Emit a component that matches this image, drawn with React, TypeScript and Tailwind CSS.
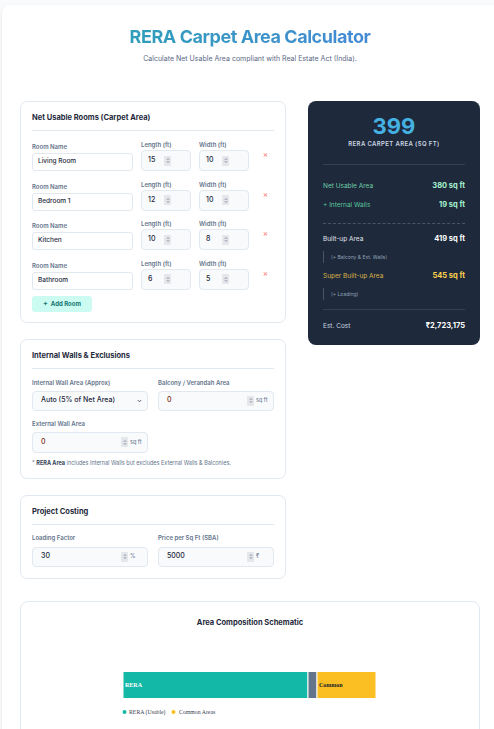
import React from "react";

interface Room {
  name: string;
  length: number;
  width: number;
}

const rooms: Room[] = [
  { name: "Living Room", length: 15, width: 10 },
  { name: "Bedroom 1", length: 12, width: 10 },
  { name: "Kitchen", length: 10, width: 8 },
  { name: "Bathroom", length: 6, width: 5 },
];

const font = { fontFamily: "Inter, 'Noto Sans', sans-serif" };

function Spinner() {
  return (
    <div className="flex h-[10px] w-[7px] flex-col items-center justify-center gap-[1px] rounded-[1px] bg-[#e5e7eb]">
      <svg width="4" height="3" viewBox="0 0 4 3">
        <path d="M0 3 L2 0.5 L4 3 Z" fill="#b6bcc6" />
      </svg>
      <svg width="4" height="3" viewBox="0 0 4 3">
        <path d="M0 0 L2 2.5 L4 0 Z" fill="#b6bcc6" />
      </svg>
    </div>
  );
}

function Label({ children, className = "" }: { children: React.ReactNode; className?: string }) {
  return (
    <div className={"text-[6px] leading-[8px] font-semibold text-[#64748b] " + className}>
      {children}
    </div>
  );
}

function NumField({
  value,
  unit,
  height,
  valueClass = "text-[#1e293b]",
}: {
  value: string;
  unit?: string;
  height: string;
  valueClass?: string;
}) {
  return (
    <div className={"flex items-center rounded-[4px] border border-[#e2e8f0] bg-[#f8fafc] pl-[8px] " + height}>
      <span className={"flex-1 text-[7px] font-medium " + valueClass}>{value}</span>
      <Spinner />
      <span className="w-[19px] pl-[2px] text-[5.5px] text-[#64748b]">{unit}</span>
    </div>
  );
}

function CardHeading({ children }: { children: React.ReactNode }) {
  return (
    <div className="border-b border-[#e2e8f0] pb-[6px] text-[7.5px] leading-[12px] font-bold text-[#1e293b]">
      {children}
    </div>
  );
}

function RoomRow({ room }: { room: Room }) {
  return (
    <div className="grid grid-cols-[101px_50px_50px_1fr] items-end gap-x-[8px]">
      <div>
        <Label className="mb-[2px]">Room Name</Label>
        <div className="flex h-[18px] items-center rounded-[3px] border border-[#e2e8f0] bg-white px-[5px] text-[6.5px] font-medium text-[#1e293b]">
          {room.name}
        </div>
      </div>
      <div>
        <Label className="mb-[1px]">Length (ft)</Label>
        <div className="flex h-[21px] items-center rounded-[4px] border border-[#e2e8f0] bg-[#f8fafc] pl-[6px]">
          <span className="w-[16px] text-[7px] font-medium text-[#1e293b]">{room.length}</span>
          <Spinner />
        </div>
      </div>
      <div>
        <Label className="mb-[1px]">Width (ft)</Label>
        <div className="flex h-[21px] items-center rounded-[4px] border border-[#e2e8f0] bg-[#f8fafc] pl-[6px]">
          <span className="w-[16px] text-[7px] font-medium text-[#1e293b]">{room.width}</span>
          <Spinner />
        </div>
      </div>
      <div className="flex h-[30px] items-start justify-center pt-[9px] text-[8px] leading-[8px] text-[#f87171]">
        ×
      </div>
    </div>
  );
}

function SummaryRow({
  label,
  value,
  labelClass,
  valueClass,
}: {
  label: string;
  value: string;
  labelClass: string;
  valueClass: string;
}) {
  return (
    <div className="flex items-center justify-between leading-[10px]">
      <span className={"text-[6.5px] " + labelClass}>{label}</span>
      <span className={"text-[7.5px] font-bold " + valueClass}>{value}</span>
    </div>
  );
}

function Note({ children }: { children: React.ReactNode }) {
  return (
    <div className="border-l border-[#475569] py-[2px] pl-[7px] text-[5px] leading-[8px] text-[#94a3b8]">
      {children}
    </div>
  );
}

function Schematic() {
  const serif = "'Liberation Serif', 'DejaVu Serif', serif";
  return (
    <svg width="256" height="70" viewBox="0 0 256 70" className="mx-auto block">
      <rect x="1" y="20.5" width="185" height="27" fill="#14b8a6" stroke="#ffffff" strokeWidth="1" />
      <rect x="186" y="20.5" width="9" height="27" fill="#64748b" stroke="#ffffff" strokeWidth="1" />
      <rect x="195" y="20.5" width="59" height="27" fill="#fbbf24" stroke="#ffffff" strokeWidth="1" />
      <text x="3" y="36" fontSize="6" fill="#ffffff" fontFamily={serif} fontWeight="bold">
        RERA
      </text>
      <text x="197" y="36" fontSize="6" fill="#111827" fontFamily={serif} fontWeight="bold">
        Common
      </text>
      <circle cx="2.5" cy="61" r="2" fill="#14b8a6" />
      <text x="7" y="63" fontSize="5.8" fill="#374151" fontFamily={serif}>
        RERA (Usable)
      </text>
      <circle cx="51.5" cy="61" r="2" fill="#fbbf24" />
      <text x="57" y="63" fontSize="5.8" fill="#374151" fontFamily={serif}>
        Common Areas
      </text>
    </svg>
  );
}

export default function App() {
  return (
    <div className="min-h-[729px] w-full overflow-hidden bg-[#f8fafc] pt-[5px] pl-[2px]" style={font}>
      <div className="min-h-[724px] w-[520px] rounded-tl-[8px] bg-white pt-[20px] pl-[18px] shadow-sm">
        <div className="w-[460px]">
          {/* Header */}
          <h1 className="bg-gradient-to-r from-[#1ea6ad] to-[#4d7fe0] bg-clip-text text-center text-[18px] leading-[24px] font-bold tracking-tight text-transparent">
            RERA Carpet Area Calculator
          </h1>
          <p className="mt-[5px] text-center text-[7px] leading-[10px] text-[#5b6885]">
            Calculate Net Usable Area compliant with Real Estate Act (India).
          </p>

          <div className="mt-[37px] grid grid-cols-[266px_172px] gap-x-[22px]">
            {/* Left column */}
            <div className="flex flex-col gap-[16px]">
              <div className="rounded-[7px] border border-[#e2e8f0] bg-white px-[11px] pt-[10px] pb-[10px]">
                <CardHeading>Net Usable Rooms (Carpet Area)</CardHeading>
                <div className="mt-[10px] flex flex-col gap-[9.5px]">
                  {rooms.map((r) => (
                    <RoomRow key={r.name} room={r} />
                  ))}
                </div>
                <button className="mt-[6px] flex h-[16px] w-[60px] items-center justify-center gap-[3px] rounded-[3px] bg-[#ccfbf1] text-[6px] font-bold text-[#0f766e]">
                  <span className="text-[7px] leading-[7px]">+</span> Add Room
                </button>
              </div>

              <div className="rounded-[7px] border border-[#e2e8f0] bg-white px-[11px] pt-[10px] pb-[11px]">
                <CardHeading>Internal Walls &amp; Exclusions</CardHeading>
                <div className="mt-[10px] grid grid-cols-2 gap-x-[10px]">
                  <div>
                    <Label className="mb-[4px] font-medium">Internal Wall Area (Approx)</Label>
                    <div className="flex h-[20px] items-center justify-between rounded-[4px] border border-[#e2e8f0] bg-[#f8fafc] pr-[5px] pl-[8px]">
                      <span className="text-[7px] font-medium text-[#1e293b]">Auto (5% of Net Area)</span>
                      <svg width="5" height="4" viewBox="0 0 5 4">
                        <path d="M0.8 1 L2.5 2.8 L4.2 1" stroke="#374151" strokeWidth="0.8" fill="none" />
                      </svg>
                    </div>
                  </div>
                  <div>
                    <Label className="mb-[4px] font-medium">Balcony / Verandah Area</Label>
                    <NumField value="0" unit="sq ft" height="h-[20px]" valueClass="text-[#7c2d12]" />
                  </div>
                </div>
                <div className="mt-[9px] grid grid-cols-2 gap-x-[10px]">
                  <div>
                    <Label className="mb-[4px] font-medium">External Wall Area</Label>
                    <NumField value="0" unit="sq ft" height="h-[21px]" valueClass="text-[#7c2d12]" />
                  </div>
                </div>
                <p className="mt-[6px] text-[5.5px] leading-[8px] text-[#64748b]">
                  * <span className="font-bold text-[#334155]">RERA Area</span> includes Internal Walls but
                  excludes External Walls &amp; Balconies.
                </p>
              </div>

              <div className="rounded-[7px] border border-[#e2e8f0] bg-white px-[11px] pt-[10px] pb-[11px]">
                <CardHeading>Project Costing</CardHeading>
                <div className="mt-[9px] grid grid-cols-2 gap-x-[10px]">
                  <div>
                    <Label className="mb-[5px] font-medium">Loading Factor</Label>
                    <NumField value="30" unit="%" height="h-[20px]" />
                  </div>
                  <div>
                    <Label className="mb-[5px] font-medium">Price per Sq Ft (SBA)</Label>
                    <NumField value="5000" unit="₹" height="h-[20px]" />
                  </div>
                </div>
              </div>
            </div>

            {/* Right column: summary */}
            <div>
              <div className="rounded-[8px] bg-[#1e293b] px-[15px] pt-[13px] pb-[14px]">
                <div className="text-center text-[22px] leading-[24px] font-bold text-[#45b1e2]">399</div>
                <div className="mt-[2px] text-center text-[6px] leading-[8px] font-semibold tracking-[0.06em] text-[#cbd5e1]">
                  RERA CARPET AREA (SQ FT)
                </div>
                <div className="mt-[16px] border-t border-[#334155]" />
                <div className="mt-[16px] flex flex-col gap-[9px]">
                  <SummaryRow
                    label="Net Usable Area"
                    value="380 sq ft"
                    labelClass="text-[#6fd0a8]"
                    valueClass="text-[#a7f3d0]"
                  />
                  <SummaryRow
                    label="+ Internal Walls"
                    value="19 sq ft"
                    labelClass="text-[#5cc79d]"
                    valueClass="text-[#a7f3d0]"
                  />
                </div>
                <div className="mt-[13px] border-t border-dashed border-[#475569]" />
                <div className="mt-[10px]">
                  <SummaryRow
                    label="Built-up Area"
                    value="419 sq ft"
                    labelClass="text-[#e2e8f0]"
                    valueClass="text-white"
                  />
                </div>
                <div className="mt-[7px]">
                  <Note>(+ Balcony &amp; Ext. Walls)</Note>
                </div>
                <div className="mt-[8px]">
                  <SummaryRow
                    label="Super Built-up Area"
                    value="545 sq ft"
                    labelClass="text-[#dcb447]"
                    valueClass="text-[#fcd34d]"
                  />
                </div>
                <div className="mt-[7px]">
                  <Note>(+ Loading)</Note>
                </div>
                <div className="mt-[9px] border-t border-[#334155]" />
                <div className="mt-[11px]">
                  <SummaryRow
                    label="Est. Cost"
                    value="₹2,723,175"
                    labelClass="text-[#cbd5e1]"
                    valueClass="text-white"
                  />
                </div>
              </div>
            </div>
          </div>

          {/* Chart */}
          <div className="mt-[22px] h-[160px] rounded-[8px] border border-[#e2e8f0] bg-white pt-[15px]">
            <h3 className="text-center text-[7.5px] leading-[12px] font-bold text-[#1e293b]">
              Area Composition Schematic
            </h3>
            <div className="mt-[22px]">
              <Schematic />
            </div>
          </div>
        </div>
      </div>
    </div>
  );
}
